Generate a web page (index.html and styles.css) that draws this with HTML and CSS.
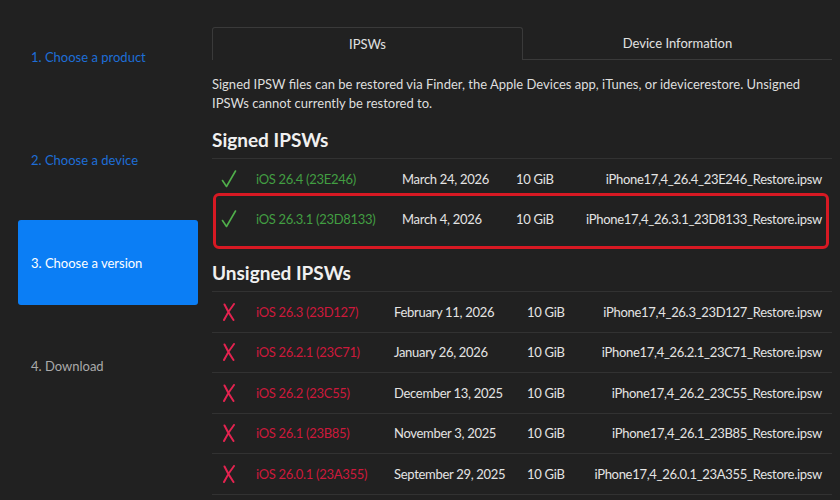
FILE: index.html
```html
<!DOCTYPE html>
<html>
  <head>
    <title>IPSW Downloads</title>
    <link rel="stylesheet" href="styles.css">
  </head>
  <body>
    <div class="sidebar">
      <div class="step step-done">1. Choose a product</div>
      <div class="step step-done">2. Choose a device</div>
      <div class="step step-active">3. Choose a version</div>
      <div class="step">4. Download</div>
    </div>

    <div class="main">
      <div class="tabs">
        <div class="tab tab-active">IPSWs</div>
        <div class="tab">Device Information</div>
      </div>

      <p class="intro">Signed IPSW files can be restored via Finder, the Apple Devices app, iTunes, or idevicerestore. Unsigned IPSWs cannot currently be restored to.</p>

      <h2 class="section-title">Signed IPSWs</h2>
      <div class="table-wrap">
        <table class="fw-table signed">
          <colgroup>
            <col class="c-icon"><col class="c-ver"><col class="c-date"><col class="c-size"><col>
          </colgroup>
          <tr>
            <td class="icon ok"><svg class="mark" width="16" height="18" viewBox="0 0 16 18"><path d="M1.5 10.5 L5.5 16.5 L14.5 1" /></svg></td>
            <td class="ver ok">iOS 26.4 (23E246)</td>
            <td>March 24, 2026</td>
            <td>10 GiB</td>
            <td class="file">iPhone17,4_26.4_23E246_Restore.ipsw</td>
          </tr>
          <tr>
            <td class="icon ok"><svg class="mark" width="16" height="18" viewBox="0 0 16 18"><path d="M1.5 10.5 L5.5 16.5 L14.5 1" /></svg></td>
            <td class="ver ok">iOS 26.3.1 (23D8133)</td>
            <td>March 4, 2026</td>
            <td>10 GiB</td>
            <td class="file">iPhone17,4_26.3.1_23D8133_Restore.ipsw</td>
          </tr>
        </table>
        <div class="highlight"></div>
      </div>

      <h2 class="section-title section-unsigned">Unsigned IPSWs</h2>
      <table class="fw-table unsigned">
        <colgroup>
          <col class="c-icon"><col class="c-ver"><col class="c-date"><col class="c-size"><col>
        </colgroup>
        <tr>
          <td class="icon bad"><svg class="mark" width="14" height="18" viewBox="0 0 14 18"><path d="M2.5 1.5 Q6 9 11.5 17 M12 1 Q6 8.5 2 17" /></svg></td>
          <td class="ver bad">iOS 26.3 (23D127)</td>
          <td>February 11, 2026</td>
          <td>10 GiB</td>
          <td class="file">iPhone17,4_26.3_23D127_Restore.ipsw</td>
        </tr>
        <tr>
          <td class="icon bad"><svg class="mark" width="14" height="18" viewBox="0 0 14 18"><path d="M2.5 1.5 Q6 9 11.5 17 M12 1 Q6 8.5 2 17" /></svg></td>
          <td class="ver bad">iOS 26.2.1 (23C71)</td>
          <td>January 26, 2026</td>
          <td>10 GiB</td>
          <td class="file">iPhone17,4_26.2.1_23C71_Restore.ipsw</td>
        </tr>
        <tr>
          <td class="icon bad"><svg class="mark" width="14" height="18" viewBox="0 0 14 18"><path d="M2.5 1.5 Q6 9 11.5 17 M12 1 Q6 8.5 2 17" /></svg></td>
          <td class="ver bad">iOS 26.2 (23C55)</td>
          <td>December 13, 2025</td>
          <td>10 GiB</td>
          <td class="file">iPhone17,4_26.2_23C55_Restore.ipsw</td>
        </tr>
        <tr>
          <td class="icon bad"><svg class="mark" width="14" height="18" viewBox="0 0 14 18"><path d="M2.5 1.5 Q6 9 11.5 17 M12 1 Q6 8.5 2 17" /></svg></td>
          <td class="ver bad">iOS 26.1 (23B85)</td>
          <td>November 3, 2025</td>
          <td>10 GiB</td>
          <td class="file">iPhone17,4_26.1_23B85_Restore.ipsw</td>
        </tr>
        <tr>
          <td class="icon bad"><svg class="mark" width="14" height="18" viewBox="0 0 14 18"><path d="M2.5 1.5 Q6 9 11.5 17 M12 1 Q6 8.5 2 17" /></svg></td>
          <td class="ver bad">iOS 26.0.1 (23A355)</td>
          <td>September 29, 2025</td>
          <td>10 GiB</td>
          <td class="file">iPhone17,4_26.0.1_23A355_Restore.ipsw</td>
        </tr>
      </table>
    </div>
  </body>
</html>
```

FILE: styles.css
```css
body {
  margin: 0;
  display: flex;
  background-color: rgb(33, 33, 33);
  color: rgb(228, 228, 228);
  font-family: Lato, "Noto Sans", sans-serif;
  font-size: 13px;
  height: 500px;
  overflow: hidden;
}

/* left steps */
.sidebar {
  width: 180px;
  flex-shrink: 0;
  padding: 14px 14px 0 18px;
  display: flex;
  flex-direction: column;
  gap: 18px;
}

.step {
  height: 85px;
  display: flex;
  align-items: center;
  padding-left: 13px;
  border-radius: 3px;
  font-size: 13px;
  color: rgb(170, 170, 170);
}

.step-done {
  color: rgb(30, 110, 215);
}

.step-active {
  background-color: rgb(11, 126, 245);
  color: white;
}

/* main column */
.main {
  width: 620px;
  padding-top: 27px;
}

.tabs {
  display: flex;
  height: 33px;
}

.tab {
  flex: 1;
  display: flex;
  align-items: center;
  justify-content: center;
  border-bottom: 1px solid rgb(58, 58, 58);
  color: rgb(225, 225, 225);
}

.tab-active {
  border: 1px solid rgb(58, 58, 58);
  border-bottom: none;
  border-radius: 3px 3px 0 0;
}

.intro {
  margin: 15px 0 0 0;
  line-height: 19px;
  color: rgb(222, 222, 222);
}

.section-title {
  margin: 15px 0 6px 0;
  font-size: 19px;
  font-weight: 700;
  line-height: 24px;
  color: rgb(240, 240, 240);
}

.section-unsigned {
  margin-top: 22px;
}

.table-wrap {
  position: relative;
}

.fw-table {
  width: 620px;
  table-layout: fixed;
  border-collapse: collapse;
}

.fw-table td {
  height: 39.5px;
  padding: 0 10px;
  border-top: 1px solid rgb(50, 50, 50);
  white-space: nowrap;
  letter-spacing: -0.3px;
  color: rgb(228, 228, 228);
}

.signed tr + tr td {
  border-top-color: transparent;
}

.unsigned tr:last-child td {
  border-bottom: 1px solid rgb(50, 50, 50);
}

.c-icon { width: 34px; }
.signed .c-ver { width: 146px; }
.signed .c-date { width: 114px; }
.signed .c-size { width: 70px; }
.unsigned .c-ver { width: 138px; }
.unsigned .c-date { width: 133px; }
.unsigned .c-size { width: 60px; }

.fw-table td.icon {
  padding: 0;
  text-align: center;
  line-height: 0;
}

.mark {
  fill: none;
  stroke-width: 1.6;
  stroke-linecap: round;
  stroke-linejoin: round;
}

.ok .mark {
  stroke: rgb(80, 175, 75);
}

.bad .mark {
  stroke: rgb(228, 35, 80);
  stroke-width: 2;
}

.fw-table td.ok {
  color: rgb(66, 158, 66);
}

.fw-table td.bad {
  color: rgb(205, 25, 60);
}

.fw-table td.file {
  text-align: right;
}

.highlight {
  position: absolute;
  left: 1px;
  top: 35px;
  width: 610px;
  height: 50px;
  border: 3px solid rgb(215, 25, 35);
  border-radius: 6px;
}
```
